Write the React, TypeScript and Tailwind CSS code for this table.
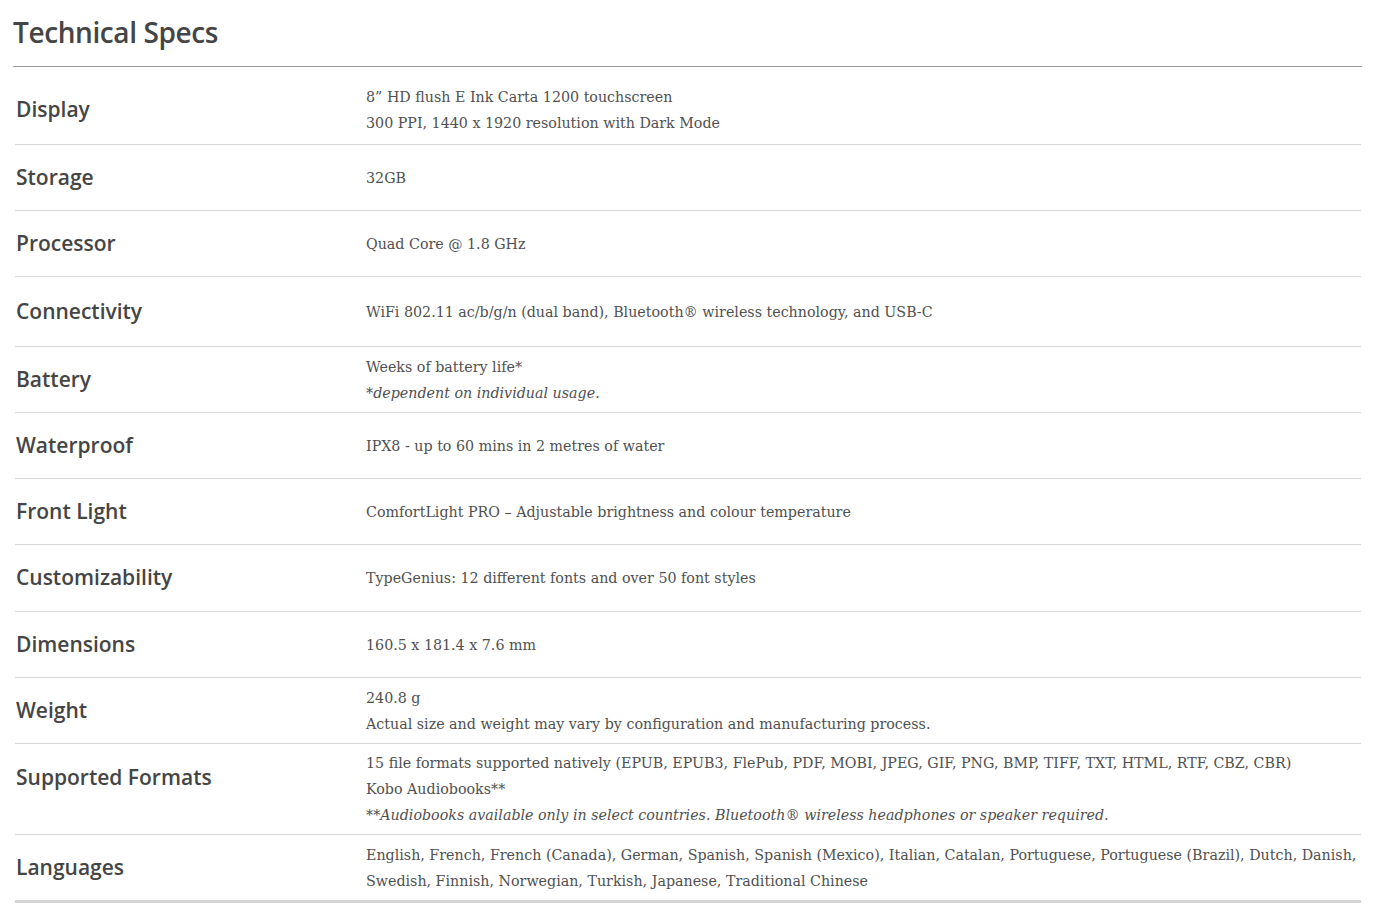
import type { ReactNode } from "react";

type Spec = {
  label: string;
  lines: ReactNode[];
  rowClass?: string;
  labelClass?: string;
  valueClass?: string;
};

const specs: Spec[] = [
  {
    label: "Display",
    lines: ["8” HD flush E Ink Carta 1200 touchscreen", "300 PPI, 1440 x 1920 resolution with Dark Mode"],
    rowClass: "pt-[10px] pb-[2px]",
  },
  { label: "Storage", lines: ["32GB"] },
  { label: "Processor", lines: ["Quad Core @ 1.8 GHz"] },
  {
    label: "Connectivity",
    lines: ["WiFi 802.11 ac/b/g/n (dual band), Bluetooth® wireless technology, and USB-C"],
    rowClass: "min-h-[70px]",
  },
  {
    label: "Battery",
    lines: ["Weeks of battery life*", <em key="b">*dependent on individual usage.</em>],
  },
  { label: "Waterproof", lines: ["IPX8 - up to 60 mins in 2 metres of water"] },
  { label: "Front Light", lines: ["ComfortLight PRO – Adjustable brightness and colour temperature"] },
  {
    label: "Customizability",
    lines: ["TypeGenius: 12 different fonts and over 50 font styles"],
    rowClass: "min-h-[67px]",
  },
  { label: "Dimensions", lines: ["160.5 x 181.4 x 7.6 mm"] },
  {
    label: "Weight",
    lines: ["240.8 g", "Actual size and weight may vary by configuration and manufacturing process."],
  },
  {
    label: "Supported Formats",
    lines: [
      "15 file formats supported natively (EPUB, EPUB3, FlePub, PDF, MOBI, JPEG, GIF, PNG, BMP, TIFF, TXT, HTML, RTF, CBZ, CBR)",
      "Kobo Audiobooks**",
      <em key="s">**Audiobooks available only in select countries. Bluetooth® wireless headphones or speaker required.</em>,
    ],
    labelClass: "pb-[22px]",
    valueClass: "py-[6px]",
  },
  {
    label: "Languages",
    lines: [
      "English, French, French (Canada), German, Spanish, Spanish (Mexico), Italian, Catalan, Portuguese, Portuguese (Brazil), Dutch, Danish, Swedish, Finnish, Norwegian, Turkish, Japanese, Traditional Chinese",
    ],
  },
];

export default function App() {
  return (
    <div className="min-h-screen bg-white pl-[13px] pr-[15px]">
      {/* Header */}
      <div className="h-[67px] border-b border-[#999999] pt-[12px]">
        <h1 className="text-[28px] leading-[40px] font-semibold text-[#454545] [font-family:'Open_Sans',sans-serif] tracking-[-0.4px]">
          Technical Specs
        </h1>
      </div>

      {/* Spec rows */}
      <div className="ml-[2px] mr-[1px] border-b-[3px] border-[#d4d4d4]">
        {specs.map((s, i) => (
          <div
            key={s.label}
            className={`flex items-center min-h-[66px] ${i > 0 ? "border-t border-[#d9d9d9]" : ""} ${s.rowClass ?? ""}`}
          >
            <div
              className={`w-[351px] shrink-0 pl-[1px] text-[21px] font-semibold text-[#454545] [font-family:'Open_Sans',sans-serif] ${s.labelClass ?? ""}`}
            >
              {s.label}
            </div>
            <div
              className={`flex-1 text-[14.25px] leading-[26px] text-[#505050] [font-family:'DejaVu_Serif',serif] ${s.valueClass ?? "py-[6.5px]"}`}
            >
              {s.lines.map((l, j) => (
                <div key={j}>{l}</div>
              ))}
            </div>
          </div>
        ))}
      </div>
    </div>
  );
}
